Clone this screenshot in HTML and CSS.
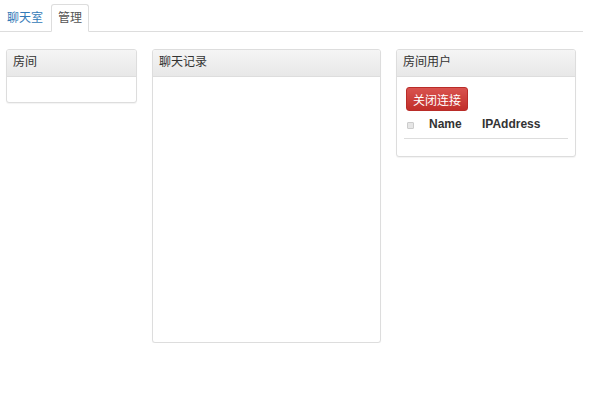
FILE: index.html
```html
<!DOCTYPE html>
<html lang="zh-CN">
<head>
  <meta charset="UTF-8" />
  <title>聊天室管理</title>
  <link rel="stylesheet" href="styles.css">
</head>
<body>

<ul class="tabs">
  <li><a href="#">聊天室</a></li>
  <li class="active"><a href="#">管理</a></li>
</ul>

<div class="row">
  <div class="panel rooms">
    <div class="panel-heading">房间</div>
    <div class="panel-body"></div>
  </div>

  <div class="panel history">
    <div class="panel-heading">聊天记录</div>
    <div class="panel-body"></div>
  </div>

  <div class="panel users">
    <div class="panel-heading">房间用户</div>
    <div class="panel-body">
      <button class="btn-danger">关闭连接</button>
      <table>
        <thead>
          <tr>
            <th class="check"><span class="box"></span></th>
            <th class="name">Name</th>
            <th>IPAddress</th>
          </tr>
        </thead>
      </table>
    </div>
  </div>
</div>

</body>
</html>
```

FILE: styles.css
```css
* { box-sizing: border-box; }

body {
  margin: 0;
  padding: 0 6px 0 0;
  font-family: "Liberation Sans", "Noto Sans CJK SC", Arial, sans-serif;
  font-size: 12px;
  color: #333;
  background: #fff;
}

.tabs {
  list-style: none;
  margin: 0;
  padding: 4px 0 0 0;
  display: flex;
  border-bottom: 1px solid #ddd;
}

.tabs li {
  margin-bottom: -1px;
  margin-right: 1px;
}

.tabs a {
  display: block;
  height: 28px;
  line-height: 26px;
  padding: 0 6px;
  border: 1px solid transparent;
  border-radius: 3px 3px 0 0;
  color: #337ab7;
  text-decoration: none;
}

.tabs .active a {
  color: #555;
  background: #fff;
  border-color: #ddd #ddd transparent #ddd;
}

.row {
  display: flex;
  align-items: flex-start;
  gap: 15px;
  padding: 17px 0 0 6px;
}

.panel {
  border: 1px solid #ddd;
  border-radius: 3px;
  background: #fff;
  box-shadow: 0 1px 1px rgba(0, 0, 0, 0.05);
}

.panel-heading {
  height: 27px;
  line-height: 25px;
  padding: 0 6px;
  border-bottom: 1px solid #ddd;
  border-radius: 2px 2px 0 0;
  background: linear-gradient(to bottom, #f5f5f5, #e8e8e8);
}

.rooms { width: 131px; }
.rooms .panel-body { height: 25px; }

.history { width: 229px; }
.history .panel-body { height: 265px; }

.users { width: 180px; }

.users .panel-body {
  padding: 10px 7px 17px 7px;
}

.btn-danger {
  display: block;
  margin-left: 2px;
  padding: 0 6px;
  height: 24px;
  font-family: inherit;
  font-size: 12px;
  color: #fff;
  border: 1px solid #b92c28;
  border-radius: 3px;
  background: linear-gradient(to bottom, #d9534f, #c12e2a);
  cursor: pointer;
}

table {
  width: 100%;
  border-collapse: collapse;
  margin-top: 3px;
}

th {
  text-align: left;
  font-weight: bold;
  height: 24px;
  padding: 0 0 3px 0;
  border-bottom: 1px solid #ddd;
  color: #333;
}

th.check {
  width: 25px;
  padding-left: 3px;
}

th.name { width: 53px; }

.box {
  display: inline-block;
  width: 7px;
  height: 7px;
  border: 1px solid #ccc;
  border-radius: 1px;
  background: #e6e6e6;
  vertical-align: middle;
}
```
